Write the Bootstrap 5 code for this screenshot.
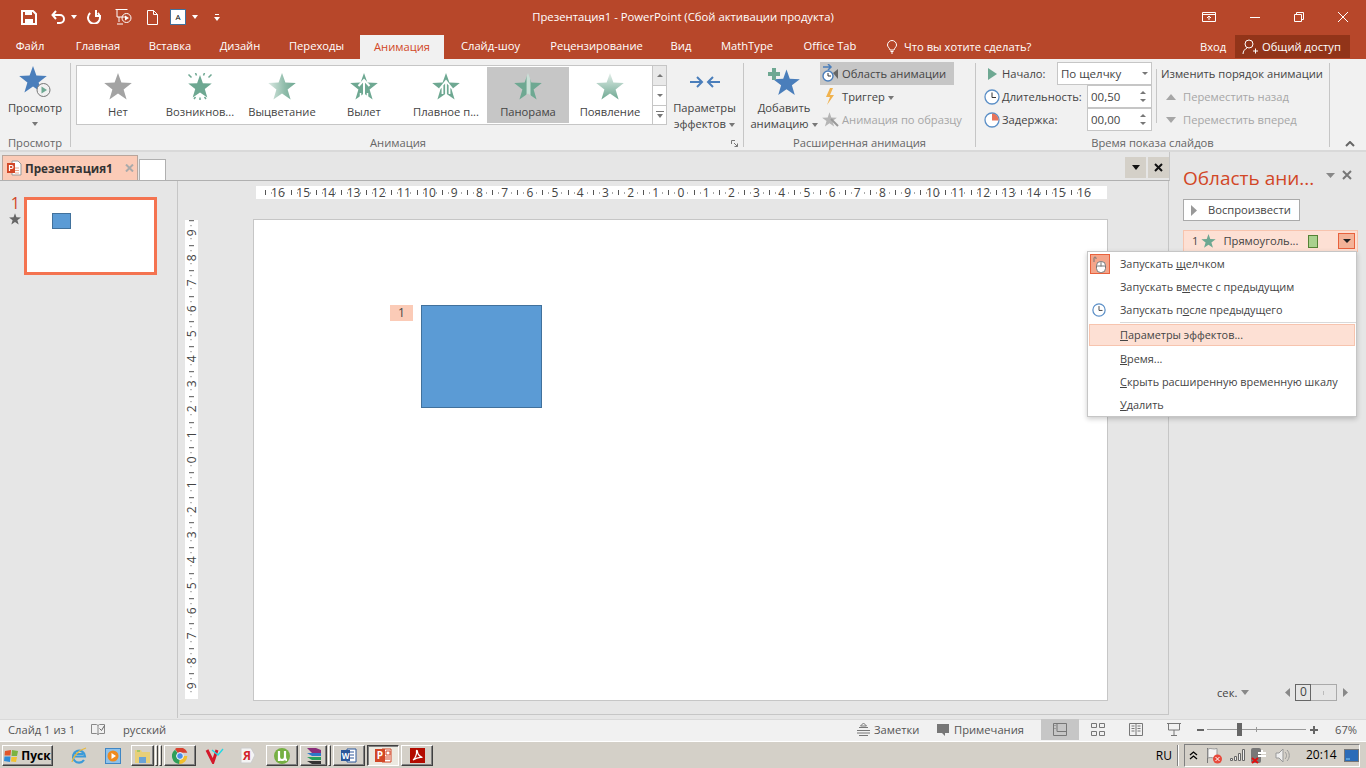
<!DOCTYPE html>
<html lang="ru">
<head>
<meta charset="utf-8">
<title>Презентация1 - PowerPoint</title>
<link href="https://cdn.jsdelivr.net/npm/bootstrap@5.3.0/dist/css/bootstrap.min.css" rel="stylesheet">
<style>
html,body{height:768px;overflow:hidden}
body{width:1366px;font-family:"Open Sans","Liberation Sans",sans-serif;font-size:11.2px;line-height:16px;color:#444;background:#e6e6e6;position:relative}
svg{display:block;flex:none}
.titlebar{height:34px;background:#b7472a;color:#fff;display:grid;grid-template-columns:1fr auto 1fr;align-items:center}
.qat{padding-left:21px}
.qat svg:nth-child(2){margin-left:14px}.qat svg:nth-child(3){margin-left:5px}.qat svg:nth-child(4){margin-left:10px}
.qat svg:nth-child(5){margin-left:14px}.qat svg:nth-child(6){margin-left:15px}.qat svg:nth-child(7){margin-left:12px}
.qat svg:nth-child(8){margin-left:6px}.qat svg:nth-child(9){margin-left:16px}
.titletext{font-size:11.3px}
.winctl{padding-right:18px}
.winctl svg{margin-left:34px}
.tabs{height:25px;background:#b7472a;color:#fff;flex-wrap:nowrap}
.tabs .nav-link{color:#fff;padding:0;height:25px;line-height:24px;text-align:center;white-space:nowrap;font-size:inherit}
.tabs .nav-link.active{background:#f1f1f1;color:#d24726;margin-top:1px;height:24px;line-height:23px}
.tabs .nav-item:nth-child(1) .nav-link{width:60px}
.tabs .nav-item:nth-child(2) .nav-link{width:76px}
.tabs .nav-item:nth-child(3) .nav-link{width:68px}
.tabs .nav-item:nth-child(4) .nav-link{width:72px}
.tabs .nav-item:nth-child(5) .nav-link{width:81px}
.tabs .nav-item:nth-child(6){margin-left:3px}
.tabs .nav-item:nth-child(6) .nav-link{width:84px}
.tabs .nav-item:nth-child(7) .nav-link{width:93px}
.tabs .nav-item:nth-child(8) .nav-link{width:119px}
.tabs .nav-item:nth-child(9) .nav-link{width:50px}
.tabs .nav-item:nth-child(10) .nav-link{width:82px}
.tabs .nav-item:nth-child(11) .nav-link{width:84px}
.tellme{margin-left:15px;width:313px;gap:7px}
.signin{width:35px}
.share{width:115px;height:23px;margin:1px 16px 1px 0;background:#923419;gap:4px;padding-left:7px}
.ribbon{height:93px;background:#f1f1f1;border-bottom:2px solid #d9d9d9;padding-top:4px}
.rg{height:84px;border-right:1px solid #c6c6c6;display:flex;flex-direction:column;flex:none}
.rg-body{height:72px;display:flex}
.rg-label{height:12px;line-height:16px;text-align:center;color:#666;white-space:nowrap;position:relative}
.g1{width:71px}.g2{width:673px}.g3{width:232px}.g4{width:354px}
.rbig{display:flex;flex-direction:column;align-items:center;text-align:center;white-space:nowrap;height:72px}
.rbig .ic{height:37px;display:flex;align-items:center;justify-content:center}
.caret{display:inline-block;border:3px solid transparent;border-top:4px solid #777;border-bottom:0;vertical-align:middle;margin-left:3px}
.g1 .rbig{width:70px}
.g1 .caret{margin:6px 0 0;display:block}
.gallery{margin:2px 0 0 5px;width:577px;height:60px;background:#fff;border:1px solid #c6c6c6;display:flex;padding-top:1px}
.gitem{width:82px;height:56px;display:flex;flex-direction:column;align-items:center;padding-top:6px;white-space:nowrap}
.gitem svg{margin-bottom:4px}
.gitem.sel{background:#c6c6c6}
.gscroll{width:14px;margin-top:2px;height:60px;display:flex;flex-direction:column}
.gscroll div{flex:1;border:1px solid #c6c6c6;border-left:0;border-top:0;background:#fff;display:flex;align-items:center;justify-content:center}
.gscroll div:first-child{height:21px;flex:none;background:#e9e9e9;border-top:1px solid #c6c6c6}
.fx{width:73px;margin-left:1px}
.launcher{position:absolute;right:5px;top:5px}
.g2 .rg-label{padding-right:18px}
.add{width:72px;margin-left:4px}
.rrows{width:134px;margin-top:-1px}
.rrow{height:23px;display:flex;align-items:center;white-space:nowrap}
.rrows .rrow{padding-left:2px;gap:3px}
.rrow.on{background:#c6c6c6}
.dis{color:#a6a6a6}
.tcol{width:180px;margin-top:-1px;padding:0 4px 0 6px}
.tcol .lab{width:20px;display:flex;justify-content:center;flex:none}
.tcol .txt{flex:1;white-space:nowrap;padding-left:0}
.field{background:#fff;border:1px solid #c6c6c6;height:23px;display:flex;align-items:center;justify-content:space-between;padding:0 3px;font-size:11.5px}
.fsel{width:95px}.fspin{width:65px}
.fspin .sp{display:flex;flex-direction:column;gap:5px;margin-right:2px}
.up{display:block;border:3px solid transparent;border-bottom:3px solid #777;border-top:0}
.down{display:block;border:3px solid transparent;border-top:3px solid #777;border-bottom:0}
.tsep{width:1px;height:54px;background:#c6c6c6;margin:6px 4px 0 0}
.ocol{margin-top:-1px}
.ocol .rrow{gap:7px}
.ocol .ind{padding-left:5px}
.collapse-btn{padding:78px 0 0 15px}
.main{height:567px}
.leftcol{width:1170px;flex:none}
.docrow{height:29px;border-bottom:1px solid #b0b0b0;border-right:1px solid #c6c6c6;padding-left:2px;align-items:flex-end}
.doctab{width:136px;height:25px;background:#fbcbb7;border:1px solid #b8a59b;border-bottom:0;display:flex;align-items:center;padding-left:3px;font-weight:700;font-size:11.7px;color:#333;gap:3px}
.doctab svg.x{margin-left:9px}
.newtab{width:27px;height:21px;background:#fff;border:1px solid #b0b0b0;border-bottom:0;margin-left:1px}
.docbtn{width:21px;height:21px;background:#d4d0c8;margin-bottom:2px;display:flex;align-items:center;justify-content:center}
.docbtn .caret-b{border:4px solid transparent;border-top:5px solid #111;border-bottom:0}
.docbtns{margin-left:auto;gap:2px}
.work{height:537px}
.thumbs{width:178px;border-right:1px solid #c6c6c6;padding-top:16px;flex:none}
.thumbn{width:24px;text-align:right;padding-right:4px;color:#d24726;font-size:16px;line-height:13px}
.thumbn svg{margin:3px 0 0 9px}
.thumb{width:133px;height:78px;border:3px solid #f47350;background:#fff;position:relative}
.thumb i{position:absolute;left:25px;top:13px;width:19px;height:16px;background:#5b9bd5;border:1px solid #41719c}
.edit{margin-left:2px;width:989px;height:534px;border-bottom:1px solid #c6c6c6;border-right:1px solid #c6c6c6;padding:5px 0 0 5px}
.ruler-h{margin-left:71px;width:851px;height:13px;background:#fff;display:flex;padding-left:9.4px;line-height:13px}
.ruler-h span,.ruler-v span{display:block;text-align:center;color:#444;font-size:12px;
 background-image:linear-gradient(#555,#555),linear-gradient(#aaa,#aaa),linear-gradient(#aaa,#aaa);background-repeat:no-repeat}
.ruler-h span{width:25.2px;flex:none;background-size:1px 5px,1px 2px,1px 2px;background-position:0 50%,6px 50%,19px 50%}
.slide-row{margin-top:20px}
.ruler-v{width:13px;height:479px;margin-top:1px;background:#fff;flex:none}
.ruler-v span{height:25.2px;width:13px;line-height:13px;writing-mode:vertical-rl;transform:rotate(180deg);background-size:5px 1px,2px 1px,2px 1px;background-position:50% 100%,50% 6px,50% 19px}
.slide{margin-left:55px;width:855px;height:482px;background:#fff;border:1px solid #c6c6c6;position:relative}
.shape{position:absolute;left:167px;top:85px;width:121px;height:103px;background:#5b9bd5;border:1px solid #41719c}
.tag{position:absolute;left:136px;top:85px;width:23px;height:16px;background:#fbcbb7;text-align:center;line-height:16px;font-size:12px}
.pane{width:196px;padding:14px 0 18px 13px}
.pane-title{font-size:19px;line-height:24px;color:#d24726;white-space:nowrap;width:137px}
.pane-head svg{margin:-6px 0 0 6px}
.pane-head svg+svg{margin-left:7px}
.playbtn{width:117px;height:22px;margin-top:9px;background:#fff;border:1px solid #aaa;border-radius:0;padding:0 0 0 7px;display:flex;align-items:center;gap:11px;font-size:11.2px;color:#444;line-height:16px}
.animrow{width:175px;height:22px;margin-top:9px;background:#fde0d4;border:1px solid #f7c4ae;display:flex;align-items:center;padding-left:8px;white-space:nowrap;position:relative}
.animrow svg{margin:0 7px 0 3px}
.animbar{width:10px;height:13px;background:#a9d18e;border:1px solid #548235;margin-left:9px;flex:none}
.animdrop{width:17px;height:16px;background:#f4b398;border:1px solid #e8613c;display:flex;align-items:center;justify-content:center;margin-left:auto;margin-right:2px}
.animdrop::after{content:"";border:4px solid transparent;border-top:4px solid #222;border-bottom:0}
.timeline{padding-left:34px;margin-top:auto}
.timeline .caret{border:4px solid transparent;border-top:5px solid #888;border-bottom:0;margin-left:4px}
.tri-l{margin-left:36px}
.tri-r{margin-left:6px}
.tscale{margin-left:5px;width:42px;height:17px;border:1px solid #aaa;display:flex;align-items:stretch;position:relative}
.tscale b{width:16px;border:1px solid #666;margin:-1px;text-align:center;font-weight:400;line-height:14px;font-size:12px}
.tscale u{position:absolute;left:27px;top:6px;width:1px;height:4px;background:#bbb}
.ctx{position:absolute;left:1087px;top:251px;width:270px;height:166px;padding:0;margin:0;border:1px solid #c6c6c6;border-radius:0;background:#fff;font-size:10.9px;color:#444;box-shadow:0 2px 5px rgba(0,0,0,.2)}
.ctx .dropdown-item{position:relative;height:23px;line-height:23px;padding:0 0 0 32px;color:#444;font-size:inherit;background:none}
.ctx .dropdown-divider{margin:1px 0 1px 32px;border-color:#d9d9d9;height:0;opacity:1}
.ctx .dropdown-item.hot{margin:0 1px 1px;padding-left:30px;height:22px;line-height:20px;background:#fde0d4;border:1px solid #f7c4ae;width:auto}
.ctx .ico{position:absolute;left:2px;top:2px;width:20px;height:20px;background:#f4a58a;border:1px solid #e8613c;display:flex;align-items:center;justify-content:center}
.ctx .clock{position:absolute;left:4px;top:5px}
.status{height:22px;background:#f1f1f1;border-top:1px solid #d9d9d9;color:#555;padding-bottom:2px;flex:none}
.status .sl{padding-left:8px;width:91px;white-space:nowrap;flex:none}
.status .lang{margin-left:18px;width:734px;flex:none}
.status .item{display:flex;align-items:center;gap:4px;white-space:nowrap;flex:none}
.notes{width:80px}
.cmts{width:104px}
.view{width:38px;height:21px;display:flex;align-items:center;justify-content:center;flex:none;margin-top:-1px}
.view.on{background:#c6c6c6}
.zoomer{width:125px;padding-left:4px;flex:none}
.zoomer .bar{width:99px;height:1px;background:#999;position:relative;margin:0 4px 0 3px;flex:none}
.zoomer .bar i{position:absolute;left:30px;top:-6px;width:5px;height:13px;background:#666}
.zoomer .bar u{position:absolute;left:49px;top:-2px;width:1px;height:5px;background:#999}
.pct{margin-left:17px}
.taskbar{height:27px;background:#d4d0c8;border-top:1px solid #fff;padding:3px 0 0 2px;gap:2px;align-items:flex-start;flex:none}
.raised{height:21px;background:#d4d0c8;border:1px solid;border-color:#fff #404040 #404040 #fff;box-shadow:inset -1px -1px 0 #808080;display:flex;align-items:center;justify-content:center;flex:none}
.start{width:51px;gap:2px;font-weight:700;font-size:12px;color:#000;margin-right:8px}
.ql{width:32px;height:21px;display:flex;align-items:center;justify-content:center;flex:none}
.w23{width:23px}.w32{width:32px}.w27{width:27px}
.grip{width:3px;height:21px;border:1px solid;border-color:#fff #404040 #404040 #fff;flex:none;margin-left:-1px}
.pressed{background:#ece9e0;border-color:#404040 #fff #fff #404040;box-shadow:inset 1px 1px 0 #808080}
.tray-wrap{margin-left:auto;color:#000;font-size:12px;padding-right:6px;gap:5px;height:21px}
.tray-sep{width:2px;height:21px;border-left:1px solid #808080;border-right:1px solid #fff}
.tray{width:176px;height:23px;margin-top:-1px;border:1px solid;border-color:#808080 #fff #fff #808080;display:flex;align-items:center;padding-left:4px}
.tray .t1{margin-left:8px}.tray .t2{margin-left:6px}.tray .t3{margin-left:6px}.tray .t4{margin-left:8px}
.tray .time{margin-left:15px;font-size:12px;color:#000;width:38px}
</style>
</head>
<body class="d-flex flex-column">
<svg width="0" height="0" class="position-absolute">
<defs>
<symbol id="star" viewBox="0 0 28 27"><polygon points="14,0 17.4,9.6 27.8,10 19.6,16.4 22.6,26.5 14,20.6 5.4,26.5 8.4,16.4 0.2,10 10.6,9.6"/></symbol>
<linearGradient id="gFade" x1="0" x2="1" y1="0" y2="0"><stop offset="0" stop-color="#dbe9e3"/><stop offset=".6" stop-color="#8fbcaa"/><stop offset="1" stop-color="#6ea892"/></linearGradient>
<linearGradient id="gPano" x1="0" x2="1" y1="0" y2="0"><stop offset="0" stop-color="#6ea892"/><stop offset=".42" stop-color="#6ea892"/><stop offset=".48" stop-color="#c9dfd6"/><stop offset=".56" stop-color="#c9dfd6"/><stop offset=".62" stop-color="#6ea892"/><stop offset="1" stop-color="#6ea892"/></linearGradient>
<linearGradient id="gAppear" x1="0" x2="0" y1="0" y2="1"><stop offset="0" stop-color="#e4efea"/><stop offset="1" stop-color="#6ea892"/></linearGradient>
</defs>
</svg>

<header class="titlebar">
 <div class="qat d-flex align-items-center">
  <svg width="16" height="15" viewBox="0 0 16 15"><path d="M1 1h11l3 3v10H1z" fill="none" stroke="#fff" stroke-width="2"/><rect x="4" y="1" width="7" height="4" fill="#fff"/><rect x="4" y="9" width="8" height="5" fill="#fff"/></svg>
  <svg width="15" height="14" viewBox="0 0 15 14"><path d="M5 1 1.500 5 5 9M2 5h7a4 4 0 0 1 0 8H6" fill="none" stroke="#fff" stroke-width="2"/></svg>
  <svg width="6" height="4" viewBox="0 0 6 4"><path d="M0 0h6L3 4z" fill="#fff"/></svg>
  <svg width="14" height="14" viewBox="0 0 14 14"><path d="M3.200 3a6 6 0 1 0 7.600 0" fill="none" stroke="#fff" stroke-width="2"/><path d="M9 0v6h5" fill="none" stroke="#fff" stroke-width="2"/></svg>
  <svg width="17" height="16" viewBox="0 0 17 16"><path d="M.5 .5h12M2 1v7h8M4 8v5m-2 2h6" fill="none" stroke="#fff"/><circle cx="11.500" cy="9" r="4.500" fill="none" stroke="#fff"/><path d="M10 6.500v5l4-2.500z" fill="#fff"/></svg>
  <svg width="11" height="15" viewBox="0 0 11 15"><path d="M.5 .5h6l4 4v10H.5zM6.500 .5v4h4" fill="none" stroke="#fff"/></svg>
  <svg width="16" height="16" viewBox="0 0 16 16"><rect x=".5" y=".5" width="15" height="15" fill="#fff" stroke="#41719c"/><text x="8" y="11" font-size="8" font-family="Open Sans" text-anchor="middle" fill="#000">A</text></svg>
  <svg width="6" height="4" viewBox="0 0 6 4"><path d="M0 0h6L3 4z" fill="#fff"/></svg>
  <svg width="6" height="7" viewBox="0 0 6 7"><path d="M1 .5h4" fill="none" stroke="#fff"/><path d="M0 3h6L3 7z" fill="#fff"/></svg>
 </div>
 <div class="titletext">Презентация1 - PowerPoint (Сбой активации продукта)</div>
 <div class="winctl d-flex justify-content-end align-items-center">
  <svg width="14" height="10" viewBox="0 0 14 10"><path d="M.5 .5h13v9H.5zM.5 2.500h13M7 8V4M5 6l2-2 2 2" fill="none" stroke="#fff"/></svg>
  <svg width="10" height="1" viewBox="0 0 10 1"><rect width="10" height="1" fill="#fff"/></svg>
  <svg width="10" height="10" viewBox="0 0 10 10"><path d="M.5 2.500h7v7h-7zM2.500 2.500v-2h7v7h-2" fill="none" stroke="#fff"/></svg>
  <svg width="10" height="10" viewBox="0 0 10 10"><path d="M0 0 10 10M10 0 0 10" stroke="#fff" fill="none"/></svg>
 </div>
</header>

<ul class="nav tabs m-0 p-0 d-flex">
 <li class="nav-item"><a class="nav-link">Файл</a></li>
 <li class="nav-item"><a class="nav-link">Главная</a></li>
 <li class="nav-item"><a class="nav-link">Вставка</a></li>
 <li class="nav-item"><a class="nav-link">Дизайн</a></li>
 <li class="nav-item"><a class="nav-link">Переходы</a></li>
 <li class="nav-item"><a class="nav-link active">Анимация</a></li>
 <li class="nav-item"><a class="nav-link">Слайд-шоу</a></li>
 <li class="nav-item"><a class="nav-link">Рецензирование</a></li>
 <li class="nav-item"><a class="nav-link">Вид</a></li>
 <li class="nav-item"><a class="nav-link">MathType</a></li>
 <li class="nav-item"><a class="nav-link">Office Tab</a></li>
 <li class="tellme d-flex align-items-center">
  <svg width="10" height="14" viewBox="0 0 10 14"><path d="M3 10C2 7 .5 7 .5 5a4.500 4.500 0 0 1 9 0C9.500 7 8 7 7 10zM3.500 11.500h3M4 13h2" fill="none" stroke="#fff"/></svg>
  <span>Что вы хотите сделать?</span>
 </li>
 <li class="signin d-flex align-items-center">Вход</li>
 <li class="share d-flex align-items-center">
  <svg width="16" height="15" viewBox="0 0 16 15"><circle cx="7" cy="5" r="4" fill="none" stroke="#fff"/><path d="M1 15c0-3 2-5 4-6M11 12h5M13.500 9.500v5" fill="none" stroke="#fff"/></svg>
  <span>Общий доступ</span>
 </li>
</ul>

<section class="ribbon d-flex">
 <div class="rg g1">
  <div class="rg-body">
   <div class="rbig">
    <div class="ic"><svg width="32" height="32" viewBox="0 0 32 32"><use href="#star" width="28" height="27" fill="#4a7ebb"/><circle cx="24.500" cy="24" r="6.500" fill="#f1f1f1" stroke="#777"/><path d="M22.500 20.500v7l5.500-3.500z" fill="#6ea892"/></svg></div>
    <span>Просмотр</span><i class="caret"></i>
   </div>
  </div>
  <div class="rg-label">Просмотр</div>
 </div>

 <div class="rg g2">
  <div class="rg-body">
   <div class="gallery">
    <div class="gitem"><svg width="28" height="27"><use href="#star" width="28" height="27" fill="#a3a3a3"/></svg><span>Нет</span></div>
    <div class="gitem"><svg width="28" height="27" viewBox="0 0 28 27"><use href="#star" x="2" y="2" width="24" height="23" fill="#6ea892"/><path d="M2.500 1.500l3 3M25.500 1.500l-3 3M9.500 0l1 2.500M18.500 0l-1 2.500M8 26l1.500-2M20 26l-1.500-2M14 27v-2.500" stroke="#6ea892" stroke-width="1.500" fill="none"/></svg><span>Возникнов...</span></div>
    <div class="gitem"><svg width="28" height="27"><use href="#star" width="28" height="27" fill="url(#gFade)"/></svg><span>Выцветание</span></div>
    <div class="gitem"><svg width="28" height="27" viewBox="0 0 28 27"><use href="#star" width="28" height="27" fill="#6ea892"/><path d="M14 22V7M8.500 13 14 7l5.500 6" fill="none" stroke="#fff" stroke-width="2"/><path d="M10.500 20v7M17.500 20v7" stroke="#fff" stroke-width="1.500"/></svg><span>Вылет</span></div>
    <div class="gitem"><svg width="28" height="27" viewBox="0 0 28 27"><use href="#star" width="28" height="27" fill="#6ea892"/><path d="M14 22V8M7.500 16 14 8l6.500 8M10.500 13v8M17.500 13v8" fill="none" stroke="#fff" stroke-width="1.800"/></svg><span>Плавное п...</span></div>
    <div class="gitem sel"><svg width="28" height="27"><use href="#star" width="28" height="27" fill="url(#gPano)"/></svg><span>Панорама</span></div>
    <div class="gitem"><svg width="28" height="27"><use href="#star" width="28" height="27" fill="url(#gAppear)"/></svg><span>Появление</span></div>
   </div>
   <div class="gscroll">
    <div><i class="up"></i></div>
    <div><i class="down"></i></div>
    <div><svg width="8" height="7" viewBox="0 0 8 7"><path d="M0 .5h8" stroke="#777"/><path d="M1 3h6L4 7z" fill="#777"/></svg></div>
   </div>
   <div class="rbig fx">
    <div class="ic"><svg width="30" height="12" viewBox="0 0 30 12"><path d="M0 6h11M7 1l5 5-5 5M30 6H19M23 1l-5 5 5 5" fill="none" stroke="#4a7ebb" stroke-width="2"/></svg></div>
    <span>Параметры</span>
    <span>эффектов<i class="caret"></i></span>
   </div>
  </div>
  <div class="rg-label">Анимация<svg class="launcher" width="7" height="7" viewBox="0 0 7 7"><path d="M.5 4V.5H4M3 3l3.500 3.500M6.500 3.500v3h-3" fill="none" stroke="#777"/></svg></div>
 </div>

 <div class="rg g3">
  <div class="rg-body">
   <div class="rbig add">
    <div class="ic"><svg width="32" height="30" viewBox="0 0 32 30"><use href="#star" x="5" y="2" width="27" height="27" fill="#4a7ebb"/><path d="M6 1v12M0 7h12" stroke="#6ea892" stroke-width="4"/></svg></div>
    <span>Добавить</span>
    <span>анимацию<i class="caret"></i></span>
   </div>
   <div class="rrows">
    <div class="rrow on"><svg width="17" height="19" viewBox="0 0 17 19"><circle cx="6" cy="12" r="5" fill="#fff" stroke="#4a7ebb" stroke-width="1.400"/><path d="M6 9v3h3" fill="none" stroke="#333"/><path d="M1 3h7M6 0l3 3-3 3" fill="none" stroke="#4a7ebb" stroke-width="1.500"/><path d="M11 9l5-4v10z" fill="#666"/></svg><span>Область анимации</span></div>
    <div class="rrow"><svg width="17" height="17" viewBox="0 0 17 17"><path d="M8 0 4 9h4l-3 8 7-10H8l3-7z" fill="#f0b24e"/></svg><span>Триггер<i class="caret"></i></span></div>
    <div class="rrow dis"><svg width="17" height="17" viewBox="0 0 17 17"><use href="#star" width="15" height="15" y="1" fill="#b5b5b5"/><path d="M9 8l7 7" stroke="#999" stroke-width="2"/></svg><span>Анимация по образцу</span></div>
   </div>
  </div>
  <div class="rg-label">Расширенная анимация</div>
 </div>

 <div class="rg g4">
  <div class="rg-body">
   <div class="tcol">
    <div class="rrow"><div class="lab"><svg width="9" height="12" viewBox="0 0 9 12"><path d="M0 0v12l9-6z" fill="#6ea892"/></svg></div><div class="txt">Начало:</div><div class="field fsel"><span>По щелчку</span><i class="down"></i></div></div>
    <div class="rrow"><div class="lab"><svg width="16" height="16" viewBox="0 0 16 16"><circle cx="8" cy="8" r="7" fill="#fff" stroke="#5b8fc7" stroke-width="1.300"/><path d="M8 3.500V8.500h4" fill="none" stroke="#333"/></svg></div><div class="txt">Длительность:</div><div class="field fspin"><span>00,50</span><span class="sp"><i class="up"></i><i class="down"></i></span></div></div>
    <div class="rrow"><div class="lab"><svg width="16" height="16" viewBox="0 0 16 16"><circle cx="8" cy="8" r="7" fill="#fff" stroke="#5b8fc7" stroke-width="1.300"/><path d="M8 1.500A6.500 6.500 0 0 1 14.500 8.500H8z" fill="#e8735a"/></svg></div><div class="txt">Задержка:</div><div class="field fspin"><span>00,00</span><span class="sp"><i class="up"></i><i class="down"></i></span></div></div>
   </div>
   <div class="tsep"></div>
   <div class="ocol">
    <div class="rrow">Изменить порядок анимации</div>
    <div class="rrow dis ind"><svg width="10" height="6" viewBox="0 0 10 6"><path d="M5 0l5 6H0z" fill="#a6a6a6"/></svg><span>Переместить назад</span></div>
    <div class="rrow dis ind"><svg width="10" height="6" viewBox="0 0 10 6"><path d="M0 0h10L5 6z" fill="#a6a6a6"/></svg><span>Переместить вперед</span></div>
   </div>
  </div>
  <div class="rg-label">Время показа слайдов</div>
 </div>
 <div class="collapse-btn"><svg width="10" height="6" viewBox="0 0 10 6"><path d="M1 5l4-4 4 4" fill="none" stroke="#666" stroke-width="2"/></svg></div>
</section>

<main class="main d-flex">
 <div class="leftcol">
  <div class="docrow d-flex">
   <div class="doctab">
    <svg width="16" height="16" viewBox="0 0 16 16"><path d="M6 1h6l3 3v11H6z" fill="#fff" stroke="#999"/><path d="M9 8h4M9 10.500h4M9 13h4" stroke="#e8a58a"/><rect x="1" y="3" width="8" height="10" fill="#d24726"/><path d="M3.500 11V5.500h2a1.500 1.500 0 0 1 0 3h-2" fill="none" stroke="#fff" stroke-width="1.200"/></svg>
    <span>Презентация1</span>
    <svg class="x" width="9" height="8" viewBox="0 0 9 8"><path d="M1 .5l7 7M8 .5l-7 7" stroke="#aaa" stroke-width="2"/></svg>
   </div>
   <div class="newtab"></div>
   <div class="docbtns d-flex">
    <div class="docbtn"><i class="caret-b"></i></div>
    <div class="docbtn"><svg width="9" height="9" viewBox="0 0 9 9"><path d="M1 1l7 7M8 1 1 8" stroke="#111" stroke-width="2"/></svg></div>
   </div>
  </div>
  <div class="work d-flex">
   <div class="thumbs d-flex">
    <div class="thumbn">1<svg width="12" height="12"><use href="#star" width="12" height="12" fill="#666"/></svg></div>
    <div class="thumb"><i></i></div>
   </div>
   <div class="edit">
    <div class="ruler-h"><span>16</span><span>15</span><span>14</span><span>13</span><span>12</span><span>11</span><span>10</span><span>9</span><span>8</span><span>7</span><span>6</span><span>5</span><span>4</span><span>3</span><span>2</span><span>1</span><span>0</span><span>1</span><span>2</span><span>3</span><span>4</span><span>5</span><span>6</span><span>7</span><span>8</span><span>9</span><span>10</span><span>11</span><span>12</span><span>13</span><span>14</span><span>15</span><span>16</span></div>
    <div class="slide-row d-flex">
     <div class="ruler-v"><span>9</span><span>8</span><span>7</span><span>6</span><span>5</span><span>4</span><span>3</span><span>2</span><span>1</span><span>0</span><span>1</span><span>2</span><span>3</span><span>4</span><span>5</span><span>6</span><span>7</span><span>8</span><span>9</span></div>
     <div class="slide"><div class="tag">1</div><div class="shape"></div></div>
    </div>
   </div>
  </div>
 </div>
 <aside class="pane d-flex flex-column">
  <div class="pane-head d-flex align-items-center">
   <div class="pane-title">Область ани...</div>
   <svg width="9" height="5" viewBox="0 0 9 5"><path d="M0 0h9L4.500 5z" fill="#888"/></svg>
   <svg width="10" height="10" viewBox="0 0 10 10"><path d="M1 1l8 8M9 1 1 9" stroke="#777" stroke-width="2"/></svg>
  </div>
  <button type="button" class="btn playbtn"><svg width="6" height="11" viewBox="0 0 6 11"><path d="M0 0v11l6-5.500z" fill="#999"/></svg><span>Воспроизвести</span></button>
  <div class="animrow">
   <span>1</span><svg width="15" height="14"><use href="#star" width="15" height="14" fill="#6ea892"/></svg><span>Прямоуголь...</span><div class="animbar"></div><div class="animdrop"></div>
  </div>
  <div class="timeline d-flex align-items-center">
   <span>сек.</span><i class="caret"></i>
   <svg class="tri-l" width="5" height="9" viewBox="0 0 5 9"><path d="M5 0v9L0 4.500z" fill="#888"/></svg>
   <div class="tscale"><b>0</b><u></u></div>
   <svg class="tri-r" width="5" height="9" viewBox="0 0 5 9"><path d="M0 0v9l5-4.500z" fill="#888"/></svg>
  </div>
 </aside>
</main>

<footer class="status d-flex align-items-center">
 <div class="sl">Слайд 1 из 1</div>
 <svg width="14" height="13" viewBox="0 0 14 13"><path d="M.5 1.500h5l1.500 1v9L5.500 10.500h-5zM7 2.500l1.500-1h5v9h-5L7 11.500" fill="none" stroke="#888"/><path d="M8.500 5.500l2 2 3-5" fill="none" stroke="#666"/></svg>
 <div class="lang">русский</div>
 <div class="item notes"><svg width="13" height="13" viewBox="0 0 13 13"><path d="M6.500 0l3 3h-6zM2 4.500h9M0 7.500h13M0 10h13M2 12.500h9" fill="none" stroke="#777"/></svg><span>Заметки</span></div>
 <div class="item cmts"><svg width="13" height="12" viewBox="0 0 13 12"><path d="M0 0h12v9H8v3L5 9H0z" fill="#777"/></svg><span>Примечания</span></div>
 <div class="view on"><svg width="14" height="13" viewBox="0 0 14 13"><path d="M.5 .5h13v12H.5zM4 .5v8h9.500M2 2v1M2 5v1" fill="none" stroke="#777"/></svg></div>
 <div class="view"><svg width="14" height="13" viewBox="0 0 14 13"><path d="M.5 .5h5v4h-5zM8.500 .5h5v4h-5zM.5 8.500h5v4h-5zM8.500 8.500h5v4h-5z" fill="none" stroke="#777"/></svg></div>
 <div class="view"><svg width="14" height="13" viewBox="0 0 14 13"><path d="M.5 .5h13v12H.5zM7 .5v12M2.500 3h3M2.500 5.500h3M2.500 8h3M8.500 3h3M8.500 5.500h3M8.500 8h3" fill="none" stroke="#777"/></svg></div>
 <div class="view"><svg width="14" height="13" viewBox="0 0 14 13"><path d="M0 .5h14M1.500 1v6h11V1M7 7v5M4 12.500h6" fill="none" stroke="#777"/></svg></div>
 <div class="zoomer d-flex align-items-center">
  <svg width="7" height="2" viewBox="0 0 7 2"><rect width="7" height="2" fill="#666"/></svg>
  <div class="bar"><i></i><u></u></div>
  <svg width="8" height="8" viewBox="0 0 8 8"><path d="M0 4h8M4 0v8" stroke="#666" stroke-width="2"/></svg>
 </div>
 <div class="pct">67%</div>
</footer>

<nav class="taskbar d-flex">
 <div class="raised start">
  <svg width="15" height="14" viewBox="0 0 15 14"><path d="M1 2 7 1l-.5 5.500H.5z" fill="#e2562b"/><path d="M8 1l6 1-1 5H7.500z" fill="#7cb342"/><path d="M.5 7.500h6L6 13 0 12z" fill="#2e8bd8"/><path d="M7.500 8H13l-1 5-5-.500z" fill="#f2c230"/></svg>
  <span>Пуск</span>
 </div>
 <div class="ql"><svg width="17" height="17" viewBox="0 0 17 17"><path d="M2 9.500h12a6 6 0 1 0-1 3.500M4 7h8" fill="none" stroke="#3c9ad8" stroke-width="2.200"/><path d="M1 15C2 9 8 3 15 1" fill="none" stroke="#e8b93c" stroke-width="1.300"/></svg></div>
 <div class="ql"><svg width="16" height="16" viewBox="0 0 16 16"><rect x=".5" y=".5" width="15" height="15" fill="#8fc1ea" stroke="#3f86c4"/><circle cx="8" cy="8" r="5.500" fill="#f08a1d"/><path d="M6.500 5v6L11 8z" fill="#fff"/></svg></div>
 <div class="raised w23"><svg width="15" height="14" viewBox="0 0 15 14"><path d="M0 1h6l1 2h8v11H0z" fill="#e8cf78"/><path d="M2 2h3" stroke="#5bbf5b"/><rect x="4" y="8" width="7" height="6" fill="#6aa3d6"/></svg></div>
 <div class="grip"></div><div class="grip"></div>
 <div class="raised w32"><svg width="16" height="16" viewBox="0 0 16 16"><path d="M8 8 3 .9A8 8 0 0 1 15.300 4.700H8z" fill="#d8412f"/><path d="M8 8h7.300A8 8 0 0 1 7 16z" fill="#f3c02c"/><path d="M8 8l-.9 8A8 8 0 0 1 3 1.800z" fill="#2f9e58"/><circle cx="8" cy="8" r="3.400" fill="#4a8ee8" stroke="#fff"/></svg></div>
 <div class="ql"><svg width="20" height="17" viewBox="0 0 20 17"><path d="M3 3l6 12 4-12" fill="none" stroke="#d3182a" stroke-width="3"/><path d="M8 3l6 5 5-6" fill="none" stroke="#22d8e4" stroke-width="1.400"/></svg></div>
 <div class="ql"><svg width="16" height="17" viewBox="0 0 16 17"><path d="M1 1h10l4 7-4 8H1z" fill="#f4f4f4" stroke="#ccc"/><text x="3" y="13" font-size="12" font-weight="700" font-family="Open Sans" fill="#d3222a">Я</text></svg></div>
 <div class="raised w32"><svg width="16" height="16" viewBox="0 0 16 16"><circle cx="8" cy="8" r="8" fill="#76b043"/><path d="M5 3v10M5 9a3 3 0 0 0 6 0V3M11 9c0 2 .5 3 2 3" fill="none" stroke="#fff" stroke-width="2.200"/></svg></div>
 <div class="raised w27"><svg width="16" height="18" viewBox="0 0 16 18"><path d="M1 1h9l5 2v3l-9 0z" fill="#8a2d7a"/><path d="M1 6l9 0 5 0v3H6z" fill="#2e78c8"/><path d="M1 10h14v3H6z" fill="#27a05c"/><path d="M1 14h14v3H6z" fill="#333"/></svg></div>
 <div class="grip"></div>
 <div class="raised w32"><svg width="16" height="15" viewBox="0 0 16 15"><path d="M6 1h9v13H6z" fill="#fff" stroke="#2b579a"/><path d="M9 4h4M9 7h4M9 10h4" stroke="#2b579a"/><rect y="2" width="9" height="11" fill="#2b579a"/><text x="4.500" y="10.500" font-size="8" font-weight="700" font-family="Open Sans" text-anchor="middle" fill="#fff">W</text></svg></div>
 <div class="raised w32 pressed"><svg width="17" height="15" viewBox="0 0 17 15"><path d="M7 1h9v13H7z" fill="#fff" stroke="#d24726"/><path d="M11 3h4v4h-4zM10 9h5M10 11h5" stroke="#d24726" fill="none"/><rect y="1" width="10" height="13" fill="#d24726"/><text x="5" y="11" font-size="10" font-weight="700" font-family="Open Sans" text-anchor="middle" fill="#fff">P</text></svg></div>
 <div class="raised w32"><svg width="15" height="15" viewBox="0 0 15 15"><rect width="15" height="15" fill="#b30b00"/><path d="M3 12c2-1 4-6 3.500-8.500C6 2 7.500 2 7.500 3.500 7.500 6 10 9 12.500 9.500 10 9 6 10 3 12z" fill="none" stroke="#fff" stroke-width="1.200"/></svg></div>
 <div class="tray-wrap d-flex align-items-center">
  <span>RU</span><div class="tray-sep"></div>
  <div class="tray">
   <svg width="9" height="9" viewBox="0 0 9 9"><path d="M1 4l3.500-3L8 4M1 8l3.500-3L8 8" fill="none" stroke="#000" stroke-width="1.300"/></svg>
   <svg class="t1" width="17" height="17" viewBox="0 0 17 17"><path d="M1.500 1v15" stroke="#777"/><path d="M2 2c3-1.500 5 1 9-.5v9c-3 1.500-6-1-9 .5z" fill="#f6f6f6" stroke="#999"/><circle cx="11.500" cy="12" r="4.500" fill="#e84a3c"/><path d="M9.500 10l4 4M13.500 10l-4 4" stroke="#fff"/></svg>
   <svg class="t2" width="16" height="12" viewBox="0 0 16 12"><path d="M1.500 9.500h2v2h-2zM5.500 7.500h2v4h-2zM9.500 4.500h2v7h-2zM13.500 .5h2v11h-2z" fill="#eee" stroke="#666"/></svg>
   <svg class="t3" width="16" height="17" viewBox="0 0 16 17"><rect y="1" width="10" height="15" rx="2" fill="#777"/><path d="M7 6h8M7 9h8M11 3v4" stroke="#fff" stroke-width="2"/><path d="M1 11l6 5M7 11l-6 5" stroke="#e01010" stroke-width="2"/></svg>
   <svg class="t4" width="16" height="15" viewBox="0 0 16 15"><path d="M1 5h3l4-4v13l-4-4H1z" fill="#eee" stroke="#999"/><path d="M10 4c2 2 2 5 0 7M12 2c3 3 3 8 0 11" fill="none" stroke="#999"/></svg>
   <div class="time">20:14</div>
   <svg width="15" height="13" viewBox="0 0 15 13"><rect x=".5" y=".5" width="14" height="12" fill="#2b6cb8" stroke="#777"/><path d="M2 10h4" stroke="#7fd0ff"/></svg>
  </div>
 </div>
</nav>

<ul class="dropdown-menu show ctx">
 <li><a class="dropdown-item"><span class="ico"><svg width="14" height="17" viewBox="0 0 14 17"><rect x="3.500" y="5.500" width="9" height="11" rx="4" fill="#fff" stroke="#777"/><path d="M8 5.500v5M3.500 10h9" stroke="#777"/><path d="M1 6V2a1 1 0 0 1 2 0v1" fill="none" stroke="#777"/></svg></span>Запускать <u>щ</u>елчком</a></li>
 <li><a class="dropdown-item">Запускать в<u>м</u>есте с предыдущим</a></li>
 <li><a class="dropdown-item"><svg class="clock" width="14" height="14" viewBox="0 0 16 16"><circle cx="8" cy="8" r="7" fill="#fff" stroke="#5b8fc7" stroke-width="1.400"/><path d="M8 3.500V8.500h4" fill="none" stroke="#333"/></svg>Запускать п<u>о</u>сле предыдущего</a></li>
 <li><hr class="dropdown-divider"></li>
 <li><a class="dropdown-item hot"><u>П</u>араметры эффектов...</a></li>
 <li><a class="dropdown-item"><u>В</u>ремя...</a></li>
 <li><a class="dropdown-item"><u>С</u>крыть расширенную временную шкалу</a></li>
 <li><a class="dropdown-item"><u>У</u>далить</a></li>
</ul>
<script src="https://cdn.jsdelivr.net/npm/bootstrap@5.3.0/dist/js/bootstrap.bundle.min.js"></script>
</body>
</html>
